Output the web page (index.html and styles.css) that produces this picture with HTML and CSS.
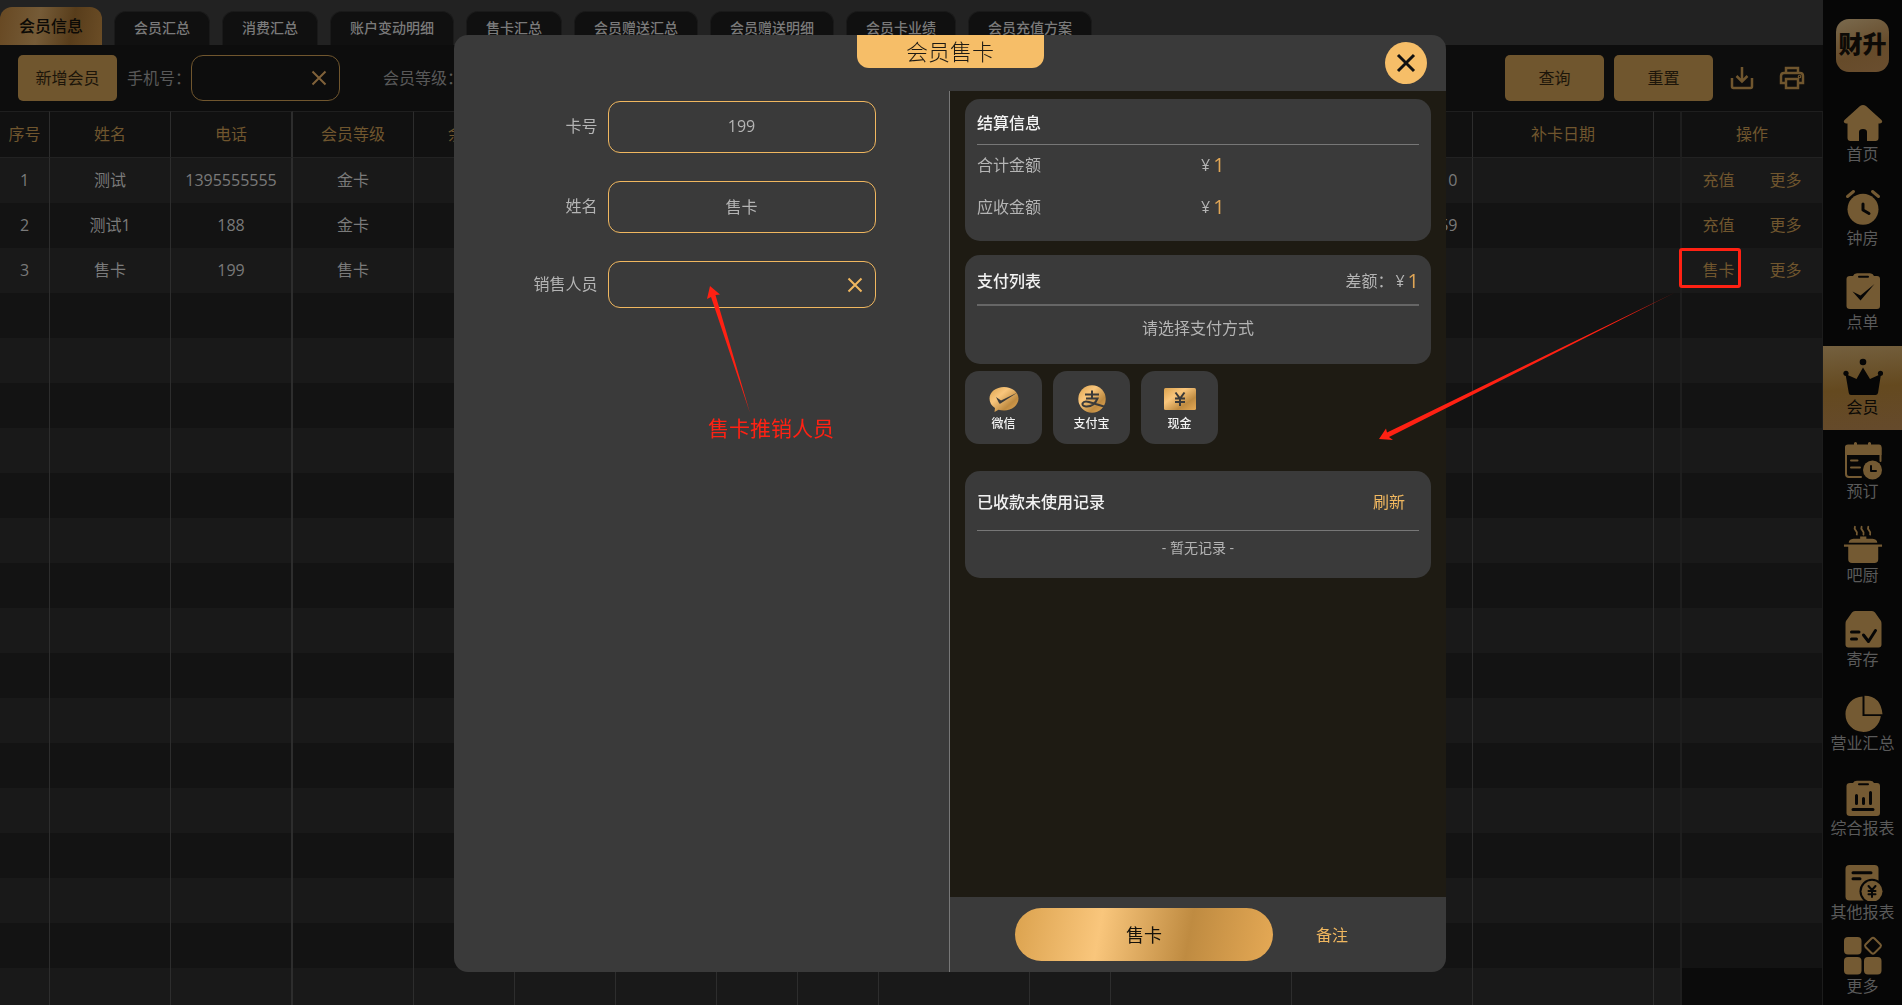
FILE: index.html
```html
<!DOCTYPE html>
<html lang="zh-CN">
<head>
    <meta charset="UTF-8">
    <meta name="viewport" content="width=device-width, initial-scale=1.0">
    <title>会员信息</title>
    <link rel="stylesheet" href="styles.css">
</head>
<body>
    <div class="app">
        <main class="main">
            <nav class="tabs">
                <a href="#" class="tab active">会员信息</a>
                <a href="#" class="tab">会员汇总</a>
                <a href="#" class="tab">消费汇总</a>
                <a href="#" class="tab">账户变动明细</a>
                <a href="#" class="tab">售卡汇总</a>
                <a href="#" class="tab">会员赠送汇总</a>
                <a href="#" class="tab">会员赠送明细</a>
                <a href="#" class="tab">会员卡业绩</a>
                <a href="#" class="tab">会员充值方案</a>
            </nav>

            <div class="toolbar">
                <button type="button" class="btn">新增会员</button>
                <label for="phone" class="phone-label">手机号：</label>
                <div class="field search-field">
                    <input type="text" id="phone">
                    <button type="button" class="clear" aria-label="清除">
                        <svg width="16" height="16" viewBox="0 0 16 16"><path d="M1.500 1.500L14.500 14.500M14.500 1.500L1.500 14.500"/></svg>
                    </button>
                </div>
                <span class="level-label">会员等级：</span>
                <div class="toolbar-right">
                    <button type="button" class="btn">查询</button>
                    <button type="button" class="btn">重置</button>
                    <button type="button" class="icon-btn" aria-label="导出">
                        <svg width="24" height="24" viewBox="0 0 24 24"><path d="M2 12V20.500Q2 22 3.500 22H20.500Q22 22 22 20.500V12M12 1V15M6.500 10L12 15.500L17.500 10"/></svg>
                    </button>
                    <button type="button" class="icon-btn" aria-label="打印">
                        <svg width="26" height="24" viewBox="0 0 26 24"><path d="M7 7V2H19V7M6 17H2V10Q2 7 5 7H21Q24 7 24 10V17H20M7 13H19V22H7Z"/><circle cx="20.500" cy="10.500" r="0.600"/></svg>
                    </button>
                </div>
            </div>

            <table class="grid">
                <colgroup>
                    <col class="w50"><col class="w121"><col class="w122"><col class="w121">
                    <col class="w101"><col class="w101"><col class="w101"><col class="w81"><col class="w81">
                    <col class="w151"><col class="w81"><col class="w181"><col class="w181"><col class="w181">
                    <col class="w26"><col>
                </colgroup>
                <thead>
                    <tr>
                        <th>序号</th><th>姓名</th><th class="thick">电话</th><th>会员等级</th><th>余额</th>
                        <th></th><th></th><th></th><th></th><th></th><th></th><th></th><th></th>
                        <th>补卡日期</th><th class="gap"></th><th class="ops">操作</th>
                    </tr>
                </thead>
                <tbody id="rows">
                    <tr>
                        <td>1</td><td>测试</td><td class="thick">1395555555</td><td>金卡</td><td></td>
                        <td></td><td></td><td></td><td></td><td></td><td></td><td></td><td>2024-08-12 17:41:10</td>
                        <td></td><td class="gap"></td><td class="ops"><a href="#">充值</a><a href="#">更多</a></td>
                    </tr>
                    <tr>
                        <td>2</td><td>测试1</td><td class="thick">188</td><td>金卡</td><td></td>
                        <td></td><td></td><td></td><td></td><td></td><td></td><td></td><td>2024-08-12 17:39:59</td>
                        <td></td><td class="gap"></td><td class="ops"><a href="#">充值</a><a href="#">更多</a></td>
                    </tr>
                    <tr>
                        <td>3</td><td>售卡</td><td class="thick">199</td><td>售卡</td><td></td>
                        <td></td><td></td><td></td><td></td><td></td><td></td><td></td><td></td>
                        <td></td><td class="gap"></td><td class="ops"><a href="#">售卡</a><a href="#">更多</a></td>
                    </tr>
                </tbody>
            </table>
        </main>

        <aside class="sidebar">
            <div class="logo">财升</div>
            <a href="#" class="nav-item">
                <svg viewBox="0 0 40 40"><path d="M17 3Q20 1 23 3L38.500 17Q40.500 20 37 20.500H35.500V35Q35.500 38 32.500 38H24V29Q24 26 20 26Q16 26 16 29V38H7.500Q4.500 38 4.500 35V20.500H3Q-.500 20 1.500 17Z"/></svg>
                首页
            </a>
            <a href="#" class="nav-item">
                <svg viewBox="0 0 40 40"><circle cx="20" cy="22.300" r="15.500"/><path class="line" d="M4.500 9.500L10.500 4.500M35.500 9.500L29.500 4.500"/><path class="cut" d="M20 17V23L26 26.500"/></svg>
                钟房
            </a>
            <a href="#" class="nav-item">
                <svg viewBox="0 0 40 40"><path d="M7 5H10Q11 2.300 14 2.300H27Q30 2.300 31 5H34Q37 5 37 8V35Q37 38 34 38H7Q3.500 38 3.500 35V8Q3.500 5 7 5Z"/><path class="cut thin" d="M16 5.800H25"/><path class="hole" d="M9.500 20.500L17.500 24.500L31.500 13L17.500 29.500Z"/></svg>
                点单
            </a>
            <a href="#" class="nav-item active">
                <svg viewBox="0 0 40 40"><circle cx="20" cy="6" r="3.300"/><circle cx="3" cy="17.300" r="2.600"/><circle cx="37.500" cy="17.300" r="2.600"/><path d="M2.500 18L13.500 23L20 11.500L27 23L38 18L35 37Q34.500 39 32.500 39H8Q6 39 5.800 37Z"/></svg>
                会员
            </a>
            <a href="#" class="nav-item">
                <svg viewBox="0 0 40 40"><path class="line thin" d="M18 37H6Q3 37 3 34V8M37.500 8V21"/><path d="M2 15V7Q2 4.500 5 4.500H11V3Q12.500 .800 14 3V4.500H25V3Q26.500 .800 28 3V4.500H36Q38.500 4.500 38.500 7V15Z"/><path class="line thin" d="M8 20.500H14.500M8 27.500H17"/><circle cx="29.500" cy="30" r="9.500"/><path class="cut thin" d="M28 26V31H33"/></svg>
                预订
            </a>
            <a href="#" class="nav-item">
                <svg viewBox="0 0 40 42"><path class="line thin" d="M11.500 3Q10.500 5 12.500 7Q14.500 9 13.500 11M18.500 3Q17.500 5 19.500 7Q21.500 9 20.500 11M25.500 3Q24.500 5 26.500 7Q28.500 9 27.500 11"/><path d="M17 15.500V13H23.500V15.500H30Q35 16 35 19.800H5Q5 16 10 15.500ZM0 21.500H40V24H36V37Q36 41 32 41H8.500Q4.500 41 4.500 37V24H0Z"/></svg>
                吧厨
            </a>
            <a href="#" class="nav-item">
                <svg viewBox="0 0 40 40"><path d="M12 3H29Q31 3 32 4.500L38 13Q38.500 14 38.500 16V36.500Q38.500 39.500 35.500 39.500H5.500Q2.500 39.500 2.500 36.500V16Q2.500 14 3 13L9 4.500Q10 3 12 3Z"/><path class="cut" d="M8.500 24H16M8.500 31H13.500M20.500 27L25.500 33.500L32.500 22.500"/></svg>
                寄存
            </a>
            <a href="#" class="nav-item">
                <svg viewBox="0 0 40 40"><path d="M19.500 4.500V24H37.800A17.700 17.700 0 1 1 19.500 4.500ZM21.500 3.700Q38 4 39.500 22.300H21.500Z"/></svg>
                营业汇总
            </a>
            <a href="#" class="nav-item">
                <svg viewBox="0 0 40 40"><path d="M7 6H10Q11 3.700 14 3.700H27Q30 3.700 31 6H34Q37 6 37 9V36Q37 39 34 39H7Q3.500 39 3.500 36V9Q3.500 6 7 6Z"/><path class="cut thin" d="M16 7.300H25"/><path class="cut" d="M13.500 18.500V26.500M20.500 21.500V26.500M27.500 15.500V26.500M10 32.500H30"/></svg>
                综合报表
            </a>
            <a href="#" class="nav-item">
                <svg viewBox="0 0 40 40"><rect x="2.500" y="4" width="33" height="35.500" rx="4"/><path class="cut" d="M10 11.700H28M10 17.700H17"/><circle class="hole" cx="29" cy="30.300" r="12.500"/><circle cx="29" cy="30.300" r="10.500"/><path class="cut thin" d="M25.500 25L29 29L32.500 25M29 29V36M25.500 30H32.500M25.500 33.200H32.500"/></svg>
                其他报表
            </a>
            <a href="#" class="nav-item last">
                <svg viewBox="0 0 40 40"><rect x="1" y="2" width="17.500" height="17.500" rx="4"/><rect x="1" y="22" width="17.500" height="17.500" rx="4"/><rect x="21" y="22" width="17.500" height="17.500" rx="4"/><path class="line thin" d="M28.500 3.500Q30 2 31.500 3.500L37.500 9.500Q38.500 10.700 37.500 12L31.500 18Q30 19.500 28.500 18L22.500 12Q21.500 10.700 22.500 9.500Z"/></svg>
                更多
            </a>
        </aside>
    </div>

    <!-- Dialog -->
    <div class="mask">
        <section class="dialog">
            <header class="dialog-head">
                <h1>会员售卡</h1>
                <button type="button" class="close" aria-label="关闭">
                    <svg width="20" height="20" viewBox="0 0 20 20"><path d="M2 2L18 18M18 2L2 18"/></svg>
                </button>
            </header>
            <div class="dialog-body">
                <form class="form">
                    <label for="card">卡号</label>
                    <input type="text" id="card" class="box" value="199">
                    <label for="name">姓名</label>
                    <input type="text" id="name" class="box" value="售卡">
                    <label for="seller">销售人员</label>
                    <div class="field seller-field">
                        <input type="text" id="seller">
                        <button type="button" class="clear" aria-label="清除">
                            <svg width="16" height="16" viewBox="0 0 16 16"><path d="M1.500 1.500L14.500 14.500M14.500 1.500L1.500 14.500"/></svg>
                        </button>
                    </div>
                </form>

                <div class="pay">
                    <div class="pay-content">
                        <div class="card settle">
                            <h2>结算信息</h2>
                            <div class="sum"><span class="sum-name">合计金额</span><span>¥</span><b>1</b></div>
                            <div class="sum"><span class="sum-name">应收金额</span><span>¥</span><b>1</b></div>
                        </div>
                        <div class="card list">
                            <h2>支付列表 <span class="diff">差额：<span class="yen">¥</span><b>1</b></span></h2>
                            <p>请选择支付方式</p>
                        </div>
                        <div class="methods">
                            <button type="button" class="method">
                                <svg width="32" height="28" viewBox="0 0 32 28">
                                    <defs>
                                        <linearGradient id="gold" x1="0" y1="0" x2="1" y2="1">
                                            <stop offset="0" stop-color="#dba24e"/>
                                            <stop offset="0.350" stop-color="#f9c67c"/>
                                            <stop offset="0.700" stop-color="#bf8b41"/>
                                            <stop offset="1" stop-color="#e5a955"/>
                                        </linearGradient>
                                    </defs>
                                    <path fill="url(#gold)" d="M16 2C24 2 30.500 7 30.500 13.500C30.500 20 24 25.500 16 25.500Q13 25.500 10.500 24.700L6.500 27L7 23Q1.500 19.500 1.500 13.500C1.500 7 8 2 16 2Z"/>
                                    <path fill="#3a3a3a" d="M8 12L13 15.500L29.500 7.500L12.500 18.500Q11.500 19 11 18Z"/>
                                </svg>
                                微信
                            </button>
                            <button type="button" class="method">
                                <svg width="32" height="28" viewBox="0 0 32 28">
                                    <circle cx="16" cy="14" r="13.700" fill="url(#gold)"/>
                                    <path class="mark" d="M9 9.500H23M16 5.500V13.500M10 13.500H21.500Q18 22 10 21.500Q6 21 6.500 18.500Q8 15.500 13 17L28 21.500"/>
                                </svg>
                                支付宝
                            </button>
                            <button type="button" class="method">
                                <svg width="32" height="28" viewBox="0 0 32 28">
                                    <rect x="0" y="3" width="32" height="22" rx="1.500" fill="url(#gold)"/>
                                    <path class="mark" d="M11.500 7.500L16 13.500L20.500 7.500M16 13.500V21M11 13.500H21M11 17H21"/>
                                </svg>
                                现金
                            </button>
                        </div>
                        <div class="card records">
                            <h2>已收款未使用记录 <button type="button" class="text-btn">刷新</button></h2>
                            <p>- 暂无记录 -</p>
                        </div>
                    </div>
                    <footer class="pay-foot">
                        <button type="button" class="submit">售卡</button>
                        <button type="button" class="text-btn">备注</button>
                    </footer>
                </div>
            </div>
        </section>
    </div>

    <!-- Notes drawn over the page -->
    <div class="notes">
        <div class="note-frame"></div>
        <svg class="note-arrows" width="1902" height="1005" viewBox="0 0 1902 1005">
            <path d="M1379 439L1386 428.500L1387 432.500L1675 292.500L1389 437L1393 440Z"/>
            <path d="M710 286L720 294.500L715.500 295L750 413L711 297L707 299Z"/>
        </svg>
        <div class="note-text">售卡推销人员</div>
    </div>

    <script>
        // fill the rest of the table with empty rows
        const rows = document.getElementById("rows");
        for (let i = 0; i < 16; i++) {
            const tr = document.createElement("tr");
            for (let c = 0; c < 16; c++) {
                const td = document.createElement("td");
                if (c === 2) td.className = "thick";
                if (c === 14) td.className = "gap";
                if (c === 15) td.className = "ops";
                tr.appendChild(td);
            }
            rows.appendChild(tr);
        }
    </script>
</body>
</html>
```
FILE: styles.css
```css
* {
    margin: 0;
    padding: 0;
    box-sizing: border-box;
}

body {
    font-family: "Open Sans", "Noto Sans CJK SC", sans-serif;
    font-size: 16px;
    line-height: 22px;
    color: #7a7a7a;
    background: #0b0b0b;
    overflow: hidden;
}

a {
    color: inherit;
    text-decoration: none;
}

button, input {
    font: inherit;
    color: inherit;
    border: none;
    background: none;
    outline: none;
}

button {
    cursor: pointer;
}

.app {
    display: flex;
    height: 100vh;
}

.main {
    flex: 1;
    min-width: 0;
    overflow: hidden;
}

/* Tabs */
.tabs {
    display: flex;
    align-items: flex-end;
    gap: 12px;
    height: 45px;
    background: #222;
}

.tab {
    height: 34px;
    padding: 0 19px;
    border: 1px solid #1a1a1a;
    border-bottom: none;
    border-radius: 12px 12px 0 0;
    background: #101010;
    font-size: 14px;
    line-height: 32px;
    font-weight: 500;
    white-space: nowrap;
}

.tab.active {
    height: 38px;
    border: none;
    font-size: 16px;
    line-height: 38px;
    color: #0c0a06;
    background: linear-gradient(100deg, #674822 0%, #755b37 38%, #583d1b 70%, #6b4d26 100%);
}

/* Toolbar */
.toolbar {
    display: flex;
    align-items: center;
    height: 66px;
    padding: 0 18px;
    background: #0d0d0d;
    color: #595959;
}

.btn {
    width: 99px;
    height: 46px;
    border-radius: 5px;
    background: #70562e;
    color: #1c150a;
}

.phone-label {
    margin-left: 10px;
    white-space: nowrap;
}

.field {
    position: relative;
    border: 1px solid #f0b75f;
    border-radius: 12px;
}

.field input {
    width: 100%;
    height: 100%;
    padding: 0 40px 0 12px;
}

.clear {
    position: absolute;
    top: 0;
    right: 12px;
    height: 100%;
    display: flex;
    align-items: center;
}

.clear svg {
    fill: none;
    stroke: #f0b75f;
    stroke-width: 2;
}

.search-field {
    width: 149px;
    height: 46px;
    border-color: #70562e;
}

.search-field .clear svg {
    stroke: #80623a;
}

.level-label {
    margin-left: 43px;
    white-space: nowrap;
}

.toolbar-right {
    display: flex;
    align-items: center;
    gap: 10px;
    margin-left: auto;
}

.icon-btn {
    display: flex;
    margin-left: 7px;
}

.icon-btn + .icon-btn {
    margin-left: 15px;
}

.icon-btn svg {
    fill: none;
    stroke: #70562e;
    stroke-width: 2.500;
}

/* Table */
.grid {
    width: 100%;
    table-layout: fixed;
    border-spacing: 0;
    text-align: center;
}

.w26 { width: 26px; }
.w50 { width: 50px; }
.w81 { width: 81px; }
.w101 { width: 101px; }
.w121 { width: 121px; }
.w122 { width: 122px; }
.w151 { width: 151px; }
.w181 { width: 181px; }

.grid th {
    height: 47px;
    padding-bottom: 2px;
    background: #111;
    border-top: 1px solid #1f1f1f;
    border-bottom: 1px solid #222;
    border-right: 1px solid #2d2d2d;
    color: #70562e;
    font-weight: 400;
    white-space: nowrap;
}

.grid td {
    height: 45px;
    padding-bottom: 2px;
    background: #191919;
    border-right: 1px solid #2d2d2d;
    white-space: nowrap;
}

.grid tr:nth-child(even) td {
    background: #131313;
}

.grid .thick {
    border-right-width: 2px;
}

.grid .gap {
    border-right: none;
}

.grid .ops {
    border-left: 2px solid #1e1e1e;
    border-right: 1px solid #1c1c1c;
    color: #70562e;
}

.grid tr:last-child td.ops {
    background: #0b0b0b;
}

.ops a + a {
    margin-left: 35px;
}

/* Sidebar */
.sidebar {
    display: flex;
    flex-direction: column;
    width: 79px;
    flex-shrink: 0;
    background: #060606;
    color: #5a5a5a;
}

.logo {
    width: 53px;
    height: 53px;
    flex-shrink: 0;
    margin: 19px auto 21px;
    border-radius: 13px;
    background: linear-gradient(160deg, #7a6a4e 0%, #664b2a 60%, #6a4e2f 100%);
    color: #0d0a06;
    font-size: 24px;
    font-weight: 900;
    line-height: 50px;
    text-align: center;
}

.nav-item {
    display: flex;
    flex: 1;
    flex-direction: column;
    align-items: center;
    padding-top: 10px;
    white-space: nowrap;
}

.nav-item svg {
    width: 40px;
    height: 40px;
    flex-shrink: 0;
    fill: #745a33;
}

.nav-item .line {
    fill: none;
    stroke: #745a33;
    stroke-width: 3;
    stroke-linecap: round;
}

.nav-item .cut {
    fill: none;
    stroke: #060606;
    stroke-width: 3;
    stroke-linecap: round;
    stroke-linejoin: round;
}

.nav-item .thin {
    stroke-width: 2;
}

.nav-item .hole {
    fill: #060606;
}

.nav-item.active {
    background: linear-gradient(175deg, #74603f 0%, #64491f 50%, #654a2c 100%);
    color: #0c0a06;
}

.nav-item.active svg {
    fill: #060606;
}

.nav-item.last {
    flex: none;
    height: 70px;
    padding-top: 0;
}

/* Dialog */
.mask {
    position: fixed;
    inset: 0;
    display: flex;
    justify-content: center;
    padding: 35px 22px 33px 20px;
}

.dialog {
    display: flex;
    flex-direction: column;
    width: 100%;
    max-width: 992px;
    border-radius: 14px;
    background: #3a3a3a;
    color: #b4b4b4;
    overflow: hidden;
}

.dialog-head {
    position: relative;
    height: 56px;
    flex-shrink: 0;
}

.dialog-head h1 {
    width: 187px;
    height: 33px;
    margin: 0 auto;
    border-radius: 0 0 12px 12px;
    background: #f6be68;
    color: #1d1a14;
    font-size: 22px;
    font-weight: 300;
    line-height: 33px;
    text-align: center;
}

.close {
    position: absolute;
    top: 7px;
    right: 19px;
    display: flex;
    align-items: center;
    justify-content: center;
    width: 42px;
    height: 42px;
    border-radius: 50%;
    background: #f6be68;
}

.close svg {
    fill: none;
    stroke: #111;
    stroke-width: 3;
}

.dialog-body {
    display: flex;
    flex: 1;
    min-height: 0;
}

.form {
    flex: 1;
    display: grid;
    grid-template-columns: 64px 268px;
    gap: 28px 10px;
    align-content: start;
    align-items: center;
    justify-content: center;
    padding: 10px 0 0 6px;
    border-right: 1px solid #777;
}

.form label {
    padding-bottom: 2px;
    text-align: right;
    white-space: nowrap;
}

.box {
    width: 100%;
    height: 52px;
    padding-bottom: 2px;
    border: 1px solid #f0b75f;
    border-radius: 12px;
    text-align: center;
}

.seller-field {
    height: 47px;
}

.pay {
    display: flex;
    flex-direction: column;
    width: 50%;
}

.pay-content {
    flex: 1;
    padding: 8px 15px;
    background: #1e1b13;
}

.card {
    padding: 0 12px;
    border-radius: 15px;
    background: #3a3a3a;
}

.card h2 {
    display: flex;
    align-items: center;
    justify-content: space-between;
    height: 46px;
    padding-top: 2px;
    border-bottom: 1px solid #777;
    color: #f2f2f2;
    font-size: 16px;
    font-weight: 500;
}

.card p {
    text-align: center;
}

.card b {
    margin-left: 3px;
    color: #e0a656;
    font-size: 20px;
    font-weight: 400;
}

.settle {
    padding-bottom: 12px;
}

.sum {
    display: flex;
    align-items: center;
    height: 42px;
    padding-bottom: 2px;
}

.sum-name {
    width: 224px;
}

.list {
    height: 109px;
    margin-top: 14px;
}

.list h2 {
    height: 51px;
    border-bottom-width: 2px;
    border-color: #666;
}

.list p {
    padding-top: 11px;
}

.diff {
    display: flex;
    align-items: center;
    color: #b4b4b4;
    font-weight: 400;
}

.yen {
    margin-left: 2px;
}

.methods {
    display: flex;
    gap: 11px;
    margin: 7px 0 27px;
}

.method {
    display: flex;
    flex-direction: column;
    align-items: center;
    gap: 2px;
    width: 77px;
    height: 73px;
    padding-top: 14px;
    border-radius: 14px;
    background: #3a3a3a;
    color: #f2f2f2;
    font-size: 12px;
    line-height: 18px;
    font-weight: 500;
}

.mark {
    fill: none;
    stroke: #3a3a3a;
    stroke-width: 2;
}

.records {
    height: 107px;
}

.records h2 {
    height: 60px;
}

.records p {
    padding-top: 6px;
    font-size: 14px;
}

.text-btn {
    color: #f0b75f;
    font-size: 16px;
    font-weight: 400;
}

.records .text-btn {
    margin-right: 14px;
}

.pay-foot {
    display: flex;
    align-items: center;
    gap: 43px;
    height: 75px;
    padding-left: 65px;
}

.submit {
    width: 258px;
    height: 53px;
    border-radius: 27px;
    background: linear-gradient(100deg, #dba24e 0%, #f9c67c 33%, #bf8b41 67%, #e5a955 100%);
    color: #14110b;
    font-size: 18px;
}

/* Notes */
.notes {
    position: fixed;
    inset: 0;
    pointer-events: none;
    overflow: hidden;
}

.note-arrows {
    position: absolute;
    top: 0;
    left: 0;
    fill: #ff2113;
}

.note-frame {
    position: absolute;
    top: 248px;
    left: 1679px;
    width: 62px;
    height: 40px;
    border: 3px solid #ff2113;
    border-radius: 3px;
}

.note-text {
    position: absolute;
    top: 416px;
    left: 708px;
    color: #ff2113;
    font-size: 21px;
    line-height: 24px;
    white-space: nowrap;
}
```
